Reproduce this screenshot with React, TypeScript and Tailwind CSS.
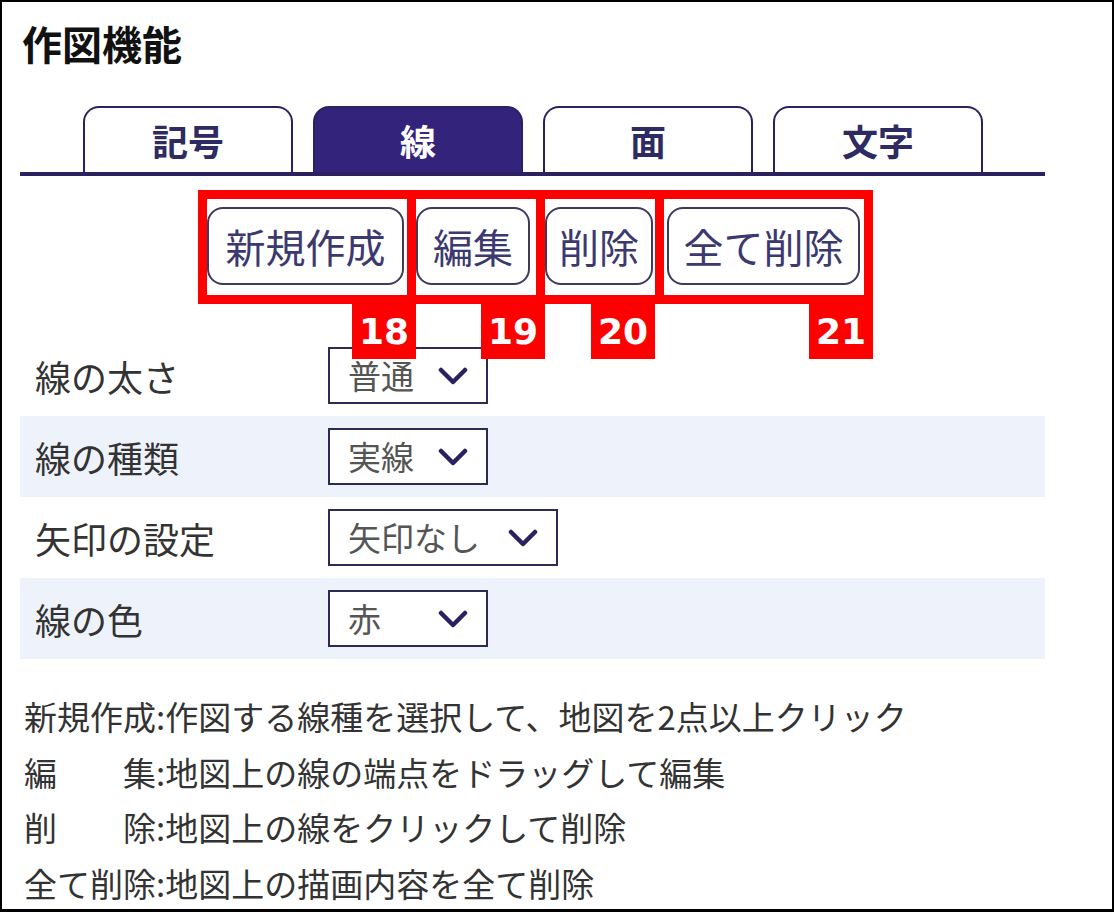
import { useState } from "react"

const TABS = ["記号", "線", "面", "文字"]

// each action button sits in a red callout frame with its number hanging below
const ACTIONS = [
  { label: "新規作成", num: "18", btn: "w-[197px]", pad: "pl-0 pr-[3px]", tag: "-right-[9px]" },
  { label: "編集", num: "19", btn: "w-[114px]", pad: "pl-0 pr-[6px]", tag: "-right-[9px]" },
  { label: "削除", num: "20", btn: "w-[108px]", pad: "pl-0 pr-[2px]", tag: "right-0" },
  { label: "全て削除", num: "21", btn: "w-[193px]", pad: "pl-[3px] pr-[4px]", tag: "-right-[9px]" },
]

const SETTINGS = [
  { label: "線の太さ", value: "普通", width: "w-[160px]", striped: false },
  { label: "線の種類", value: "実線", width: "w-[160px]", striped: true },
  { label: "矢印の設定", value: "矢印なし", width: "w-[230px]", striped: false },
  { label: "線の色", value: "赤", width: "w-[160px]", striped: true },
]

const HELP = [
  "新規作成:作図する線種を選択して、地図を2点以上クリック",
  "編　　集:地図上の線の端点をドラッグして編集",
  "削　　除:地図上の線をクリックして削除",
  "全て削除:地図上の描画内容を全て削除",
]

function Chevron() {
  return (
    <svg width="30" height="18" viewBox="0 0 30 18" className="shrink-0">
      <polyline
        points="3,3 15,15 27,3"
        fill="none"
        stroke="#2b2160"
        strokeWidth="4.5"
        strokeLinecap="round"
        strokeLinejoin="round"
      />
    </svg>
  )
}

export default function App() {
  const [tab, setTab] = useState(1)

  return (
    <div
      className="w-[1114px] h-[912px] bg-white border-2 border-b-[3px] border-black pl-[18px] overflow-hidden"
      style={{ fontFamily: '"Noto Sans CJK JP", "Noto Sans", sans-serif' }}
    >
      <div className="w-[1025px]">
        <h1 className="pt-[21px] pl-[2px] text-[40px] leading-[40px] font-bold text-[#111]">
          作図機能
        </h1>

        {/* tab strip */}
        <div className="mt-[43px] flex items-end gap-[20px] pl-[63px]">
          {TABS.map((t, i) => (
            <button
              key={t}
              type="button"
              onClick={() => setTab(i)}
              className={
                i === tab
                  ? "w-[210px] h-[66px] rounded-t-[16px] border-2 border-b-0 border-[#2b2160] bg-[#34237a] text-white text-[36px] font-bold leading-none"
                  : "w-[210px] h-[66px] rounded-t-[16px] border-2 border-b-0 border-[#2b2160] bg-white text-[#2e2a62] text-[36px] font-bold leading-none"
              }
            >
              {t}
            </button>
          ))}
        </div>
        <div className="h-[4px] bg-[#2b2160]" />

        {/* action buttons */}
        <div className="mt-[14px] flex pl-[178px]">
          {ACTIONS.map((a, i) => (
            <div
              key={a.num}
              className={`relative flex border-[9px] border-[#ff0000] pt-[8px] pb-[10px] ${a.pad} ${i > 0 ? "-ml-[9px]" : ""}`}
            >
              <button
                type="button"
                className={`${a.btn} h-[78px] rounded-[16px] border-2 border-[#3d3a5e] bg-white text-[#3c3970] text-[40px] leading-none`}
              >
                {a.label}
              </button>
              <span
                className={`absolute top-[calc(100%+9px)] ${a.tag} z-10 w-[64px] h-[55px] bg-[#ff0000] text-white text-[36px] font-bold flex items-center justify-center leading-none`}
                style={{ fontFamily: '"DejaVu Sans", sans-serif' }}
              >
                {a.num}
              </span>
            </div>
          ))}
        </div>

        {/* line settings */}
        <div className="mt-[31px]">
          {SETTINGS.map((s) => (
            <div
              key={s.label}
              className={`h-[81px] flex items-center ${s.striped ? "bg-[#eef3fb]" : "bg-white"}`}
            >
              <div className="w-[308px] pl-[15px] text-[36px] text-[#333] leading-none">{s.label}</div>
              <div
                className={`${s.width} h-[57px] border-2 border-[#2d2a55] bg-white flex items-center justify-between pl-[18px] pr-[18px]`}
              >
                <span className="text-[33px] text-[#555] leading-none">{s.value}</span>
                <Chevron />
              </div>
            </div>
          ))}
        </div>

        {/* usage notes */}
        <div className="mt-[30px] pl-[4px] text-[33px] leading-[55.5px] text-[#333]">
          {HELP.map((line) => (
            <p key={line} className="whitespace-nowrap">
              {line}
            </p>
          ))}
        </div>
      </div>
    </div>
  )
}
